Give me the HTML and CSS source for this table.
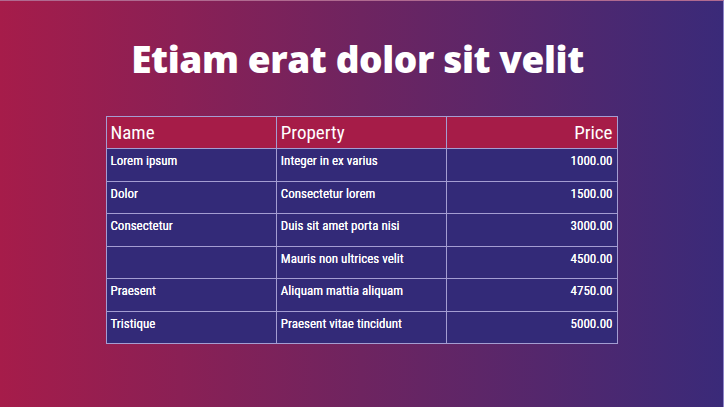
FILE: index.html
```html
<!DOCTYPE html>
<html>
<head>
<meta charset="utf-8">
<link rel="stylesheet" href="styles.css">
</head>
<body>
<div class="page">
  <h1 class="title">Etiam erat dolor sit velit</h1>
  <table class="data">
    <thead>
      <tr><th>Name</th><th>Property</th><th class="num">Price</th></tr>
    </thead>
    <tbody>
      <tr><td>Lorem ipsum</td><td>Integer in ex varius</td><td class="num">1000.00</td></tr>
      <tr><td>Dolor</td><td>Consectetur lorem</td><td class="num">1500.00</td></tr>
      <tr><td>Consectetur</td><td>Duis sit amet porta nisi</td><td class="num">3000.00</td></tr>
      <tr><td></td><td>Mauris non ultrices velit</td><td class="num">4500.00</td></tr>
      <tr><td>Praesent</td><td>Aliquam mattia aliquam</td><td class="num">4750.00</td></tr>
      <tr><td>Tristique</td><td>Praesent vitae tincidunt</td><td class="num">5000.00</td></tr>
    </tbody>
  </table>
</div>
</body>
</html>
```
FILE: styles.css
```css
html, body {
  margin: 0;
  padding: 0;
}
.page {
  width: 724px;
  height: 407px;
  box-sizing: border-box;
  background: linear-gradient(to right, #a61c4a 0%, #6e2460 50%, #3a2a79 100%);
  border-top: 1px solid #b06a90;
  border-right: 1px solid #8f86c8;
  padding-top: 30px;
  overflow: hidden;
}
.title {
  margin: 0 0 30px 0;
  padding-right: 8px;
  text-align: center;
  color: #ffffff;
  font-family: "Open Sans", "Liberation Sans", sans-serif;
  font-weight: 800;
  font-size: 37px;
  line-height: 55px;
  letter-spacing: -0.4px;
}
.data {
  width: 512px;
  margin: 0 auto;
  border-collapse: collapse;
  table-layout: fixed;
  font-family: "Roboto Condensed", "Liberation Sans Narrow", "DejaVu Sans Condensed", Roboto, sans-serif;
  color: #ffffff;
}
.data th, .data td {
  border: 1px solid #a49dd2;
  text-align: left;
  vertical-align: top;
  padding: 4px 4px 0 4px;
  box-sizing: border-box;
}
.data th {
  background: #a61c48;
  font-weight: 400;
  font-size: 19px;
  line-height: 22px;
  height: 32px;
  padding-top: 5px;
}
.data td {
  background: #332a78;
  font-weight: 400;
  font-size: 13px;
  line-height: 15px;
  height: 32.5px;
  padding-top: 4px;
  text-shadow: 0 0 0.4px #ffffff;
}
.data .num {
  text-align: right;
}
```
